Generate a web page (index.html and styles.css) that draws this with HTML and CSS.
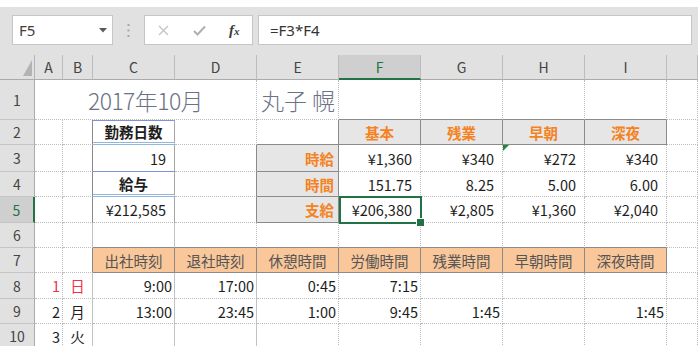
FILE: index.html
```html
<!DOCTYPE html>
<html lang="ja">
<head>
<meta charset="utf-8">
<title>Sheet</title>
<link rel="stylesheet" href="styles.css">
</head>
<body>
<div class="topbar">
  <div class="namebox"><span>F5</span><svg class="caret" width="8" height="5" viewBox="0 0 8 5"><polygon points="0,0 8,0 4,4.5" fill="#5a5a5a"/></svg></div>
  <div class="sep"><svg width="3" height="13" viewBox="0 0 3 13"><rect x="0.5" y="0" width="2" height="2" fill="#a8a8a8"/><rect x="0.5" y="5.5" width="2" height="2" fill="#a8a8a8"/><rect x="0.5" y="11" width="2" height="2" fill="#a8a8a8"/></svg></div>
  <div class="fxbox">
    <svg class="ico-x" width="11" height="11" viewBox="0 0 11 11"><path d="M1 1L10 10M10 1L1 10" stroke="#c4c4c4" stroke-width="1.4" fill="none"/></svg>
    <svg class="ico-ok" width="13" height="11" viewBox="0 0 13 11"><path d="M1 6L4.5 9.5L12 1.5" stroke="#b0b0b0" stroke-width="2" fill="none"/></svg>
    <span class="fx">f<span class="fxs">x</span></span>
  </div>
  <div class="formula">=F3*F4</div>
</div>

<div class="sheet">
  <!-- column headers -->
  <div class="corner"><span class="corner-tri"></span></div>
  <div class="ch">A</div>
  <div class="ch">B</div>
  <div class="ch">C</div>
  <div class="ch">D</div>
  <div class="ch">E</div>
  <div class="ch ch-sel">F</div>
  <div class="ch">G</div>
  <div class="ch">H</div>
  <div class="ch">I</div>
  <div class="ch"></div>

  <!-- row 1 -->
  <div class="rh">1</div>
  <div class="c title">2017年10月</div>
  <div class="c name">丸子 幌</div>
  <div class="c kb"></div>
  <div class="c kb"></div>
  <div class="c kb"></div>
  <div class="c kb"></div>
  <div class="c"></div>

  <!-- row 2 -->
  <div class="rh">2</div>
  <div class="c"></div>
  <div class="c kr"></div>
  <div class="c bx bx-top dbl ctr bold">勤務日数</div>
  <div class="c"></div>
  <div class="c kr kb"></div>
  <div class="c hd">基本</div>
  <div class="c hd">残業</div>
  <div class="c hd">早朝</div>
  <div class="c hd">深夜</div>
  <div class="c"></div>

  <!-- row 3 -->
  <div class="rh">3</div>
  <div class="c"></div>
  <div class="c kr"></div>
  <div class="c bx sgl rn">19</div>
  <div class="c kr"></div>
  <div class="c lab">時給</div>
  <div class="c rn">¥1,360</div>
  <div class="c rn">¥340</div>
  <div class="c rn err">¥272</div>
  <div class="c rn">¥340</div>
  <div class="c"></div>

  <!-- row 4 -->
  <div class="rh">4</div>
  <div class="c"></div>
  <div class="c kr"></div>
  <div class="c bx dbl ctr bold">給与</div>
  <div class="c kr"></div>
  <div class="c lab">時間</div>
  <div class="c rn">151.75</div>
  <div class="c rn">8.25</div>
  <div class="c rn">5.00</div>
  <div class="c rn">6.00</div>
  <div class="c"></div>

  <!-- row 5 -->
  <div class="rh rh-sel">5</div>
  <div class="c"></div>
  <div class="c kr"></div>
  <div class="c bx rn">¥212,585</div>
  <div class="c kr"></div>
  <div class="c lab">支給</div>
  <div class="c rn active">¥206,380</div>
  <div class="c rn">¥2,805</div>
  <div class="c rn">¥1,360</div>
  <div class="c rn">¥2,040</div>
  <div class="c"></div>

  <!-- row 6 -->
  <div class="rh">6</div>
  <div class="c"></div>
  <div class="c sr"></div>
  <div class="c kb sr"></div>
  <div class="c kb"></div>
  <div class="c kb"></div>
  <div class="c kb"></div>
  <div class="c kb"></div>
  <div class="c kb"></div>
  <div class="c kb"></div>
  <div class="c"></div>

  <!-- row 7 -->
  <div class="rh">7</div>
  <div class="c"></div>
  <div class="c kr"></div>
  <div class="c oh">出社時刻</div>
  <div class="c oh">退社時刻</div>
  <div class="c oh">休憩時間</div>
  <div class="c oh">労働時間</div>
  <div class="c oh">残業時間</div>
  <div class="c oh">早朝時間</div>
  <div class="c oh">深夜時間</div>
  <div class="c"></div>

  <!-- row 8 -->
  <div class="rh">8</div>
  <div class="c r red">1</div>
  <div class="c ctr red sr">日</div>
  <div class="c r sr">9:00</div>
  <div class="c r sr">17:00</div>
  <div class="c r">0:45</div>
  <div class="c r">7:15</div>
  <div class="c"></div>
  <div class="c"></div>
  <div class="c"></div>
  <div class="c"></div>

  <!-- row 9 -->
  <div class="rh">9</div>
  <div class="c r">2</div>
  <div class="c ctr sr">月</div>
  <div class="c r sr">13:00</div>
  <div class="c r sr">23:45</div>
  <div class="c r">1:00</div>
  <div class="c r">9:45</div>
  <div class="c r">1:45</div>
  <div class="c"></div>
  <div class="c r">1:45</div>
  <div class="c"></div>

  <!-- row 10 -->
  <div class="rh">10</div>
  <div class="c r">3</div>
  <div class="c ctr sr">火</div>
  <div class="c sr"></div>
  <div class="c sr"></div>
  <div class="c"></div>
  <div class="c"></div>
  <div class="c"></div>
  <div class="c"></div>
  <div class="c"></div>
  <div class="c"></div>
</div>
</body>
</html>
```

FILE: styles.css
```css
* { box-sizing: border-box; }
html, body { margin: 0; padding: 0; }
body {
  width: 698px;
  height: 346px;
  overflow: hidden;
  background: #fff;
  font-family: "Noto Sans CJK JP", "Noto Sans", sans-serif;
  color: #1e1e1e;
}

/* formula bar */
.topbar {
  margin-top: 7px;
  height: 48px;
  background: #e1e1e1;
  display: flex;
  align-items: flex-start;
  padding: 8px 0 0 12px;
}
.namebox {
  width: 101px;
  height: 30px;
  background: #fff;
  border: 1px solid #c6c6c6;
  display: flex;
  align-items: center;
  justify-content: space-between;
  padding: 0 5px 0 6px;
  font-family: "Noto Sans", sans-serif;
  font-size: 15px;
  color: #404040;
}
.sep {
  width: 31px;
  height: 30px;
  display: flex;
  justify-content: center;
  align-items: center;
}
.fxbox {
  width: 109px;
  height: 30px;
  background: #fff;
  border: 1px solid #c6c6c6;
  display: flex;
  align-items: center;
  padding-left: 13px;
}
.ico-ok { margin-left: 24px; }
.fx {
  margin-left: 23px;
  font-family: "Liberation Serif", serif;
  font-style: italic;
  font-weight: bold;
  font-size: 15px;
  color: #3c3c3c;
}
.fxs { font-size: 11px; }
.formula {
  margin-left: 5px;
  width: 434px;
  height: 30px;
  background: #fff;
  border: 1px solid #c6c6c6;
  display: flex;
  align-items: center;
  padding-left: 11px;
  font-family: "Noto Sans", sans-serif;
  font-size: 15px;
  color: #333;
}

/* sheet grid */
.sheet {
  display: grid;
  grid-template-columns: 35px 28px 30px repeat(7, 82px) 31px;
  grid-template-rows: 25px 40px 25px 27px 25px 26px 25px 25px 26px 25px 25px;
  font-size: 14.5px;
}
.corner {
  position: relative;
  background: #e1e1e1;
  border-right: 1px solid #b4b4b4;
  border-bottom: 1px solid #ababab;
}
.corner-tri {
  position: absolute;
  right: 2px;
  bottom: 3px;
  width: 0;
  height: 0;
  border-left: 9px solid transparent;
  border-bottom: 16px solid #b3b3b3;
}
.ch {
  background: #e1e1e1;
  border-right: 1px solid #bdbdbd;
  border-bottom: 1px solid #ababab;
  display: flex;
  justify-content: center;
  align-items: center;
  color: #444;
  font-size: 14px;
}
.ch-sel {
  background: #cfcfcf;
  color: #217346;
  border-bottom: 2px solid #217346;
}
.rh {
  background: #e1e1e1;
  border-right: 1px solid #ababab;
  border-bottom: 1px solid #c4c4c4;
  display: flex;
  justify-content: center;
  align-items: center;
  color: #444;
  font-size: 14px;
}
.rh-sel {
  background: #cfcfcf;
  color: #217346;
  border-right: 2px solid #217346;
}

.c {
  border-right: 1px dotted #bcbcbc;
  border-bottom: 1px dotted #bcbcbc;
  display: flex;
  align-items: center;
  white-space: nowrap;
  min-width: 0;
}
.r { justify-content: flex-end; padding-right: 2px; }
.rn { justify-content: flex-end; padding-right: 8px; }
.ctr { justify-content: center; }
.bold { font-weight: bold; }
.red { color: #f0304a; }
.kr { border-right: 1px solid #8a8a8a; }
.kb { border-bottom: 1px solid #8a8a8a; }
.sr { border-right: 1px solid #c2c2c2; }

.title {
  grid-column: span 4;
  justify-content: center;
  font-size: 23px;
  font-weight: 300;
  letter-spacing: -0.6px;
  color: #6b7285;
}
.name {
  padding-left: 4px;
  font-size: 23px;
  font-weight: 300;
  color: #6b7285;
}

/* C2:C5 box */
.bx {
  border-right: 1px solid #a8a8a8;
}
.bx-top { box-shadow: inset 0 1px 0 #7c93dc; }
.dbl { border-bottom: 3px double #93b8de; }
.sgl { border-bottom: 1px solid #7c93dc; }

/* header blocks */
.hd {
  background: #e6e6e6;
  border-right: 1px solid #8a8a8a;
  border-bottom: 1px solid #8a8a8a;
  justify-content: center;
  color: #f5821f;
  font-weight: bold;
}
.lab {
  background: #e6e6e6;
  border-right: 1px solid #8a8a8a;
  border-bottom: 1px solid #8a8a8a;
  justify-content: flex-end;
  padding-right: 4px;
  color: #f5821f;
  font-weight: bold;
}
.oh {
  background: #f9c79a;
  border-right: 1px solid #8a8a8a;
  border-bottom: 1px solid #8a8a8a;
  justify-content: center;
  color: #555;
}

/* error indicator */
.err { position: relative; }
.err::before {
  content: "";
  position: absolute;
  left: 0;
  top: 0;
  border-top: 6px solid #1f8a3a;
  border-right: 6px solid transparent;
}

/* active cell */
.active { position: relative; }
.active::after {
  content: "";
  position: absolute;
  left: 0;
  top: -1px;
  right: -2px;
  bottom: -2px;
  border: 2px solid #217346;
  z-index: 2;
}
.active::before {
  content: "";
  position: absolute;
  right: -5px;
  bottom: -5px;
  width: 7px;
  height: 7px;
  background: #217346;
  border: 1px solid #fff;
  z-index: 3;
}
```
